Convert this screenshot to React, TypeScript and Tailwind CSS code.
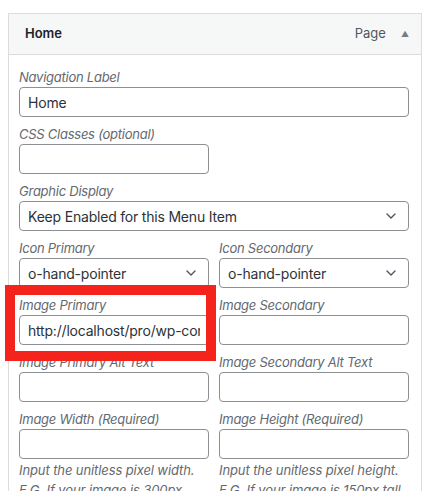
import React from "react";

const FONT = "font-['Inter',_'Liberation_Sans',_sans-serif]";

function Chevron() {
  return (
    <svg
      width="10"
      height="6"
      viewBox="0 0 10 6"
      className="absolute right-[12px] top-1/2 -translate-y-1/2"
      fill="none"
    >
      <path d="M1 1l4 4 4-4" stroke="#50575e" strokeWidth="1.4" strokeLinecap="round" strokeLinejoin="round" />
    </svg>
  );
}

function Label({ children }: { children: React.ReactNode }) {
  return (
    <div className="text-[13px] leading-[19px] italic tracking-[-0.25px] text-[#646970] whitespace-nowrap">
      {children}
    </div>
  );
}

function TextBox({ value = "", width }: { value?: string; width: string }) {
  return (
    <div
      className={`${width} h-[30px] border border-[#8c8f94] rounded-[4px] bg-white flex items-center pl-[8px] pr-[8px] overflow-hidden text-[14px] tracking-[-0.2px] text-[#2c3338] whitespace-nowrap`}
    >
      <span className="overflow-hidden">{value}</span>
    </div>
  );
}

function SelectBox({ value, width }: { value: string; width: string }) {
  return (
    <div
      className={`${width} relative h-[30px] border border-[#8c8f94] rounded-[4px] bg-white flex items-center pl-[8px] text-[14px] tracking-[-0.2px] text-[#2c3338] whitespace-nowrap`}
    >
      {value}
      <Chevron />
    </div>
  );
}

function Field({ label, children }: { label: string; children: React.ReactNode }) {
  return (
    <div className="mb-[8px]">
      <Label>{label}</Label>
      {children}
    </div>
  );
}

function Help({ children }: { children: React.ReactNode }) {
  return (
    <p className="text-[13px] leading-[20px] italic tracking-[-0.1px] text-[#646970] mt-[1px] whitespace-nowrap">
      {children}
    </p>
  );
}

export default function App() {
  return (
    <div className={`${FONT} relative w-[439px] h-[491px] overflow-hidden bg-white`}>
      <div className="ml-[8px] mt-[13px] w-[414px] border border-[#dcdcde]">
        <div className="h-[41px] bg-[#f6f7f7] border-b border-[#dcdcde] flex items-center pl-[16px] pr-[12px]">
          <span className="text-[13px] font-semibold text-[#1d2327]">Home</span>
          <span className="ml-auto text-[13px] text-[#50575e]">Page</span>
          <span className="ml-[15px] text-[8px] text-[#787c82] leading-none">▲</span>
        </div>
        <div className="pl-[10px] pt-[13px] pb-[20px]">
          <Field label="Navigation Label">
            <TextBox value="Home" width="w-[390px]" />
          </Field>
          <Field label="CSS Classes (optional)">
            <TextBox width="w-[190px]" />
          </Field>
          <Field label="Graphic Display">
            <SelectBox value="Keep Enabled for this Menu Item" width="w-[390px]" />
          </Field>
          <div className="flex gap-[10px]">
            <Field label="Icon Primary">
              <SelectBox value="o-hand-pointer" width="w-[190px]" />
            </Field>
            <Field label="Icon Secondary">
              <SelectBox value="o-hand-pointer" width="w-[190px]" />
            </Field>
          </div>
          <div className="flex gap-[10px]">
            <Field label="Image Primary">
              <TextBox value="http://localhost/pro/wp-content/uploads/hand.png" width="w-[190px]" />
            </Field>
            <Field label="Image Secondary">
              <TextBox width="w-[190px]" />
            </Field>
          </div>
          <div className="flex gap-[10px]">
            <Field label="Image Primary Alt Text">
              <TextBox width="w-[190px]" />
            </Field>
            <Field label="Image Secondary Alt Text">
              <TextBox width="w-[190px]" />
            </Field>
          </div>
          <div className="flex gap-[10px]">
            <div className="w-[190px]">
              <Label>Image Width (Required)</Label>
              <TextBox width="w-[190px]" />
              <Help>
                Input the unitless pixel width.
                <br />
                E.G. If your image is 300px
              </Help>
            </div>
            <div className="w-[190px]">
              <Label>Image Height (Required)</Label>
              <TextBox width="w-[190px]" />
              <Help>
                Input the unitless pixel height.
                <br />
                E.G. If your image is 150px tall
              </Help>
            </div>
          </div>
        </div>
      </div>
      {/* highlight frame around the primary image field */}
      <div className="absolute left-[5px] top-[285px] w-[211px] h-[76px] border-[10px] border-[#f4241c]" />
    </div>
  );
}
